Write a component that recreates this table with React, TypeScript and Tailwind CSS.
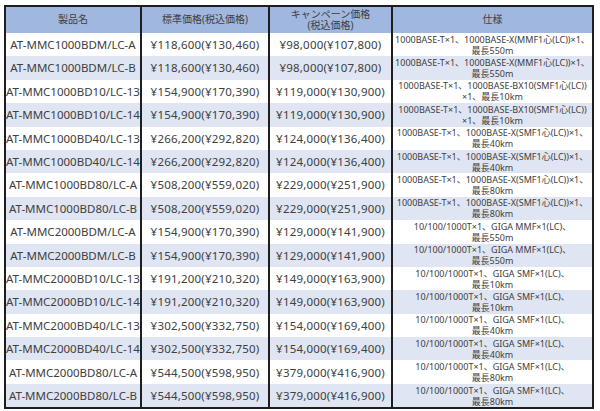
import React from "react";

const rows: [string, string, string, string, string][] = [
  ["AT-MMC1000BDM/LC-A", "¥118,600(¥130,460)", "¥98,000(¥107,800)", "1000BASE-T×1、1000BASE-X(MMF1心(LC))×1、", "最長550m"],
  ["AT-MMC1000BDM/LC-B", "¥118,600(¥130,460)", "¥98,000(¥107,800)", "1000BASE-T×1、1000BASE-X(MMF1心(LC))×1、", "最長550m"],
  ["AT-MMC1000BD10/LC-13", "¥154,900(¥170,390)", "¥119,000(¥130,900)", "1000BASE-T×1、1000BASE-BX10(SMF1心(LC))", "×1、最長10km"],
  ["AT-MMC1000BD10/LC-14", "¥154,900(¥170,390)", "¥119,000(¥130,900)", "1000BASE-T×1、1000BASE-BX10(SMF1心(LC))", "×1、最長10km"],
  ["AT-MMC1000BD40/LC-13", "¥266,200(¥292,820)", "¥124,000(¥136,400)", "1000BASE-T×1、1000BASE-X(SMF1心(LC))×1、", "最長40km"],
  ["AT-MMC1000BD40/LC-14", "¥266,200(¥292,820)", "¥124,000(¥136,400)", "1000BASE-T×1、1000BASE-X(SMF1心(LC))×1、", "最長40km"],
  ["AT-MMC1000BD80/LC-A", "¥508,200(¥559,020)", "¥229,000(¥251,900)", "1000BASE-T×1、1000BASE-X(SMF1心(LC))×1、", "最長80km"],
  ["AT-MMC1000BD80/LC-B", "¥508,200(¥559,020)", "¥229,000(¥251,900)", "1000BASE-T×1、1000BASE-X(SMF1心(LC))×1、", "最長80km"],
  ["AT-MMC2000BDM/LC-A", "¥154,900(¥170,390)", "¥129,000(¥141,900)", "10/100/1000T×1、GIGA MMF×1(LC)、", "最長550m"],
  ["AT-MMC2000BDM/LC-B", "¥154,900(¥170,390)", "¥129,000(¥141,900)", "10/100/1000T×1、GIGA MMF×1(LC)、", "最長550m"],
  ["AT-MMC2000BD10/LC-13", "¥191,200(¥210,320)", "¥149,000(¥163,900)", "10/100/1000T×1、GIGA SMF×1(LC)、", "最長10km"],
  ["AT-MMC2000BD10/LC-14", "¥191,200(¥210,320)", "¥149,000(¥163,900)", "10/100/1000T×1、GIGA SMF×1(LC)、", "最長10km"],
  ["AT-MMC2000BD40/LC-13", "¥302,500(¥332,750)", "¥154,000(¥169,400)", "10/100/1000T×1、GIGA SMF×1(LC)、", "最長40km"],
  ["AT-MMC2000BD40/LC-14", "¥302,500(¥332,750)", "¥154,000(¥169,400)", "10/100/1000T×1、GIGA SMF×1(LC)、", "最長40km"],
  ["AT-MMC2000BD80/LC-A", "¥544,500(¥598,950)", "¥379,000(¥416,900)", "10/100/1000T×1、GIGA SMF×1(LC)、", "最長80km"],
  ["AT-MMC2000BD80/LC-B", "¥544,500(¥598,950)", "¥379,000(¥416,900)", "10/100/1000T×1、GIGA SMF×1(LC)、", "最長80km"],
];

const font = { fontFamily: '"Noto Sans", "Noto Sans CJK JP", sans-serif' };

export default function App() {
  return (
    <div className="w-[600px] h-[411px] bg-white pt-[5px] pl-[4px]" style={font}>
      <div className="w-[590px] border-2 border-[#1e1e1e] text-[#404040]">
        <div className="grid grid-cols-[134px_128px_123px_1fr] h-[26px] bg-[#a0b7df] text-[10px] leading-[11.5px]">
          <div className="flex items-center justify-center">製品名</div>
          <div className="flex items-center justify-center border-l-2 border-[#1e1e1e]">標準価格(税込価格)</div>
          <div className="flex flex-col items-center justify-center border-l-2 border-[#1e1e1e]">
            <span>キャンペーン価格</span>
            <span>(税込価格)</span>
          </div>
          <div className="flex items-center justify-center border-l-2 border-[#1e1e1e]">仕様</div>
        </div>
        {rows.map((r, i) => (
          <div
            key={i}
            className={`grid grid-cols-[134px_128px_123px_1fr] h-[23.4px] ${i % 2 === 0 ? "bg-white" : "bg-[#dfe5f2]"}`}
          >
            <div className="flex items-center justify-center text-[11.5px] whitespace-nowrap overflow-hidden">{r[0]}</div>
            <div className="flex items-center justify-center border-l-2 border-[#1e1e1e] text-[11.5px] tracking-[0.2px] whitespace-nowrap">{r[1]}</div>
            <div className="flex items-center justify-center border-l-2 border-[#1e1e1e] text-[11.5px] tracking-[0.2px] whitespace-nowrap">{r[2]}</div>
            <div className="flex flex-col items-center justify-center border-l-2 border-[#1e1e1e] text-[9px] leading-[11px] whitespace-nowrap overflow-hidden">
              <span>{r[3]}</span>
              <span>{r[4]}</span>
            </div>
          </div>
        ))}
      </div>
    </div>
  );
}
